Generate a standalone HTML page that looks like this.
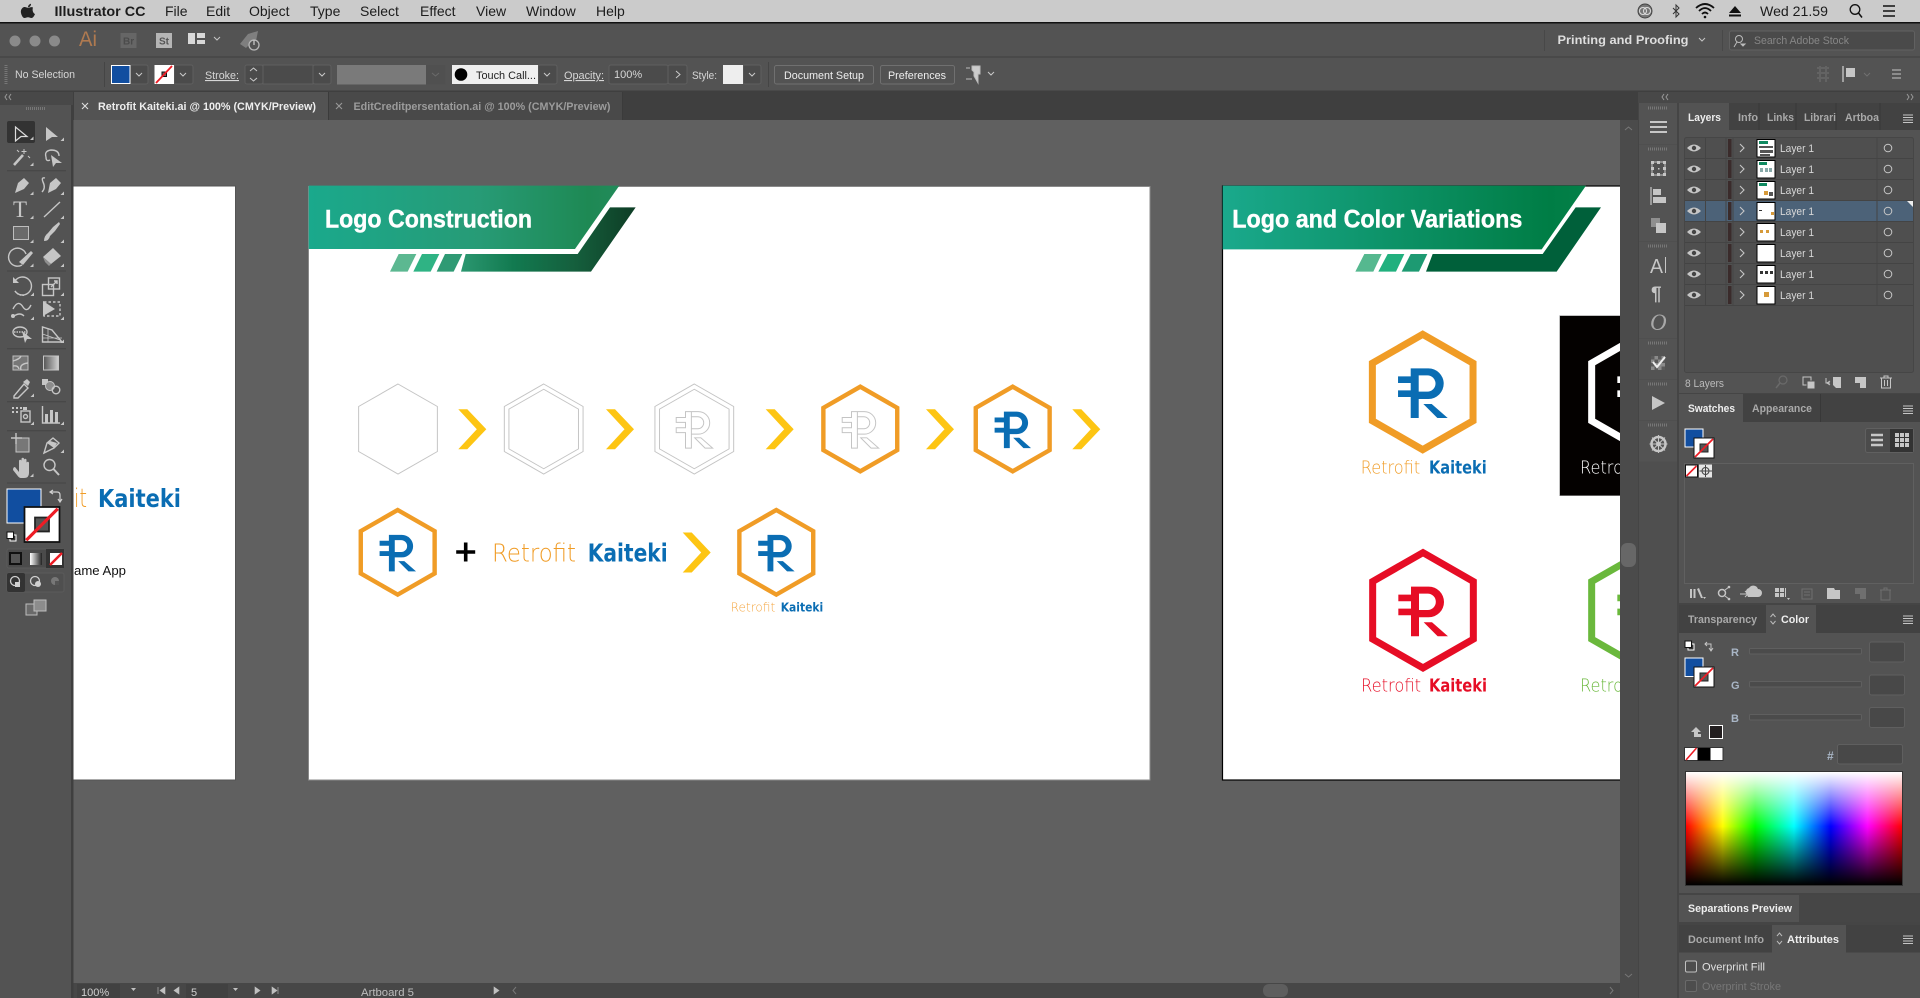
<!DOCTYPE html>
<html><head><meta charset="utf-8"><title>Illustrator CC</title>
<style>
html,body{margin:0;padding:0;background:#535353;width:1920px;height:998px;overflow:hidden}
svg{display:block;position:absolute;left:0;top:0}
text{font-family:"Liberation Sans",sans-serif}
.m{font-size:14px;fill:#1c1c1c}
.c{font-size:11px;fill:#d6d6d6}
.t{font-size:11px;fill:#a9a9a9;font-weight:bold}
.ta{font-size:11px;fill:#eeeeee;font-weight:bold}
.l{font-size:11px;fill:#d8d8d8}
.i{fill:#c6c6c6}
.s{fill:none;stroke:#c6c6c6;stroke-width:1.4}
text.r{font-family:"DejaVu Sans",sans-serif;font-weight:200}
text.k{font-family:"DejaVu Sans",sans-serif;font-weight:bold}
</style></head><body>
<svg width="1920" height="998" viewBox="0 0 1920 998" xmlns="http://www.w3.org/2000/svg">
<defs>
<path id="hexO" d="M0,-184L161,-92V92L0,184L-161,92V-92Z"/>
<path id="hexC" d="M0,-173L151,-86.5V86.5L0,173L-151,86.5V-86.5Z"/>
<path id="rl" d="M-36,-71H-12V78H-36V15H-74V-5H-36V-27H-74V-47H-36ZM-12,-71H17A46,46 0 0 1 17,21H-12V-1H14A24.5,24.5 0 0 0 14,-50H-12ZM2,36H27L75,78H44Z"/>
<path id="chev" d="M0,0H9L28,20L9,40H0L18.500,20Z" fill="#fdc513"/>
<path id="cn" d="M0,0L3.500,0L3.500,-3.500Z" fill="#c6c6c6"/>
<path id="menuic" d="M0,0H10M0,2.500H10M0,5H10M0,7.500H10" stroke="#c6c6c6" stroke-width="1" fill="none"/>
<g id="none"><rect x="0" y="0" width="20" height="20" fill="#fff" stroke="#111" stroke-width="1"/><rect x="6" y="6" width="8" height="8" fill="#555" stroke="#222"/><path d="M1,19L19,1" stroke="#ee1c25" stroke-width="1.800"/></g>
<g id="rowd">
<path d="M1687,10Q1694,3 1701,10Q1694,17 1687,10Z" fill="#c6c6c6"/><circle cx="1694" cy="10" r="2.200" fill="#444"/>
<rect x="1728" y="1" width="3.500" height="18" fill="#3a2b2b"/>
<path d="M1705.500,0V20M1726,0V20M1733,0V20M1877,0V20" stroke="#444" stroke-width="1"/>
<path d="M1740,6L1744,10L1740,14" fill="none" stroke="#c6c6c6" stroke-width="1.100"/>
<circle cx="1888" cy="10" r="3.800" fill="none" stroke="#c6c6c6"/>
<rect x="1757" y="1.500" width="18" height="17.500" fill="#fff" stroke="#000"/>
<path d="M1685,20.500H1913" stroke="#444"/>
</g>
<linearGradient id="g1" x1="0" x2="1" y1="0" y2="0"><stop offset="0" stop-color="#1aa98c"/><stop offset=".55" stop-color="#279b76"/><stop offset=".9" stop-color="#1e8954"/><stop offset="1" stop-color="#228a5a"/></linearGradient>
<linearGradient id="g2" x1="0" x2="1" y1="0" y2="0"><stop offset="0" stop-color="#2b9770"/><stop offset=".3" stop-color="#127a50"/><stop offset=".65" stop-color="#155f3d"/><stop offset="1" stop-color="#0e3d25"/></linearGradient>
<linearGradient id="g3" x1="0" x2="1" y1="0" y2="0"><stop offset="0" stop-color="#1aa98c"/><stop offset=".9" stop-color="#007d45"/><stop offset="1" stop-color="#048048"/></linearGradient>
<linearGradient id="sp"><stop offset="0" stop-color="#ff0000"/><stop offset=".17" stop-color="#ffff00"/><stop offset=".32" stop-color="#00ff00"/><stop offset=".5" stop-color="#00ffff"/><stop offset=".67" stop-color="#0000ff"/><stop offset=".84" stop-color="#ff00ff"/><stop offset="1" stop-color="#ff0000"/></linearGradient>
<linearGradient id="sw" x1="0" x2="0" y1="0" y2="1"><stop offset="0" stop-color="#fff"/><stop offset=".48" stop-color="#fff" stop-opacity="0"/></linearGradient>
<linearGradient id="sb" x1="0" x2="0" y1="0" y2="1"><stop offset=".48" stop-color="#000" stop-opacity="0"/><stop offset="1" stop-color="#000"/></linearGradient>
<linearGradient id="gr"><stop offset="0" stop-color="#555"/><stop offset="1" stop-color="#d0d0d0"/></linearGradient>
<linearGradient id="grb"><stop offset="0" stop-color="#fff"/><stop offset="1" stop-color="#222"/></linearGradient>
<clipPath id="cv"><rect x="73" y="120" width="1547" height="863"/></clipPath>
</defs>

<!-- base -->
<rect width="1920" height="998" fill="#535353"/>

<!-- menu bar -->
<rect width="1920" height="22" fill="#cbcbcb"/>
<rect y="22" width="1920" height="1.500" fill="#111"/>
<path d="M33,7.500C31,6.500 29.500,7.800 28,7.800C26.500,7.800 25,6.500 23.500,7.300C21.500,8.300 20.500,10.500 21,13C21.500,15.500 23,18 24.500,18C25.800,18 26.500,17.200 28,17.200C29.500,17.200 30,18 31.500,18C33,18 34.500,15.500 35,14C33,13.200 32,10 33,7.500ZM28,7.300C28,5.500 29.500,4 31,3.800C31.200,5.500 29.800,7.300 28,7.300Z" fill="#222"/>
<text x="54.500" y="16" class="m" style="font-weight:bold" textLength="91" lengthAdjust="spacingAndGlyphs">Illustrator CC</text>
<text x="165" y="16" class="m">File</text>
<text x="206" y="16" class="m">Edit</text>
<text x="249" y="16" class="m">Object</text>
<text x="310" y="16" class="m">Type</text>
<text x="360" y="16" class="m">Select</text>
<text x="420" y="16" class="m">Effect</text>
<text x="476" y="16" class="m">View</text>
<text x="526" y="16" class="m">Window</text>
<text x="596" y="16" class="m">Help</text>
<g fill="none" stroke="#333">
<circle cx="1645" cy="11" r="7" fill="#777" stroke="#444"/><circle cx="1643" cy="11" r="3.500" stroke="#ddd"/><circle cx="1647" cy="11" r="3.500" stroke="#ddd"/>
<path d="M1673,8L1679,14L1676,17V5L1679,8L1673,14" stroke-width="1"/>
<path d="M1696,8Q1705,0 1714,8M1699,11Q1705,5 1711,11M1702,14Q1705,11 1708,14" stroke="#111" stroke-width="1.800"/><circle cx="1705" cy="17" r="1.300" fill="#111" stroke="none"/>
<path d="M1735,6L1741,13H1729Z" fill="#111" stroke="none"/><rect x="1729" y="14.500" width="12" height="2" fill="#111" stroke="none"/>
<circle cx="1855" cy="9.500" r="4.800" stroke="#111" stroke-width="1.300"/><path d="M1858.500,13L1862,17.500" stroke="#111" stroke-width="1.500"/>
<path d="M1883,6H1895M1883,11H1895M1883,16H1895" stroke="#111" stroke-width="1.600"/>
</g>
<text x="1760" y="16" class="m" textLength="68" lengthAdjust="spacingAndGlyphs">Wed 21.59</text>

<!-- app bar -->
<rect y="23.500" width="1920" height="33" fill="#535353"/>
<rect y="56.500" width="1920" height="1" fill="#3f3f3f"/>
<circle cx="15" cy="41" r="5.500" fill="#8a8a8a"/><circle cx="35" cy="41" r="5.500" fill="#8a8a8a"/><circle cx="54.500" cy="41" r="5.500" fill="#8a8a8a"/>
<text x="79" y="46" style="font-size:21px;fill:#b07a50" textLength="18" lengthAdjust="spacingAndGlyphs">Ai</text>
<rect x="120.500" y="33" width="16" height="15" fill="#666"/><text x="123" y="44.500" style="font-size:10px;font-weight:bold;fill:#4b4b4b">Br</text>
<rect x="156" y="33" width="16" height="15" fill="#b5b5b5"/><text x="159" y="44.500" style="font-size:10px;font-weight:bold;fill:#555">St</text>
<path d="M188,33H195V44H188ZM197,33H205V38H197ZM197,40H205V44H197Z" fill="#d8d8d8"/>
<path d="M214,37L217,40L220,37" fill="none" stroke="#c6c6c6"/>
<path d="M240,44L248,34L258,31L256,41L250,44L246,48Z" fill="#7f7f7f"/><circle cx="254" cy="45" r="5" fill="#535353" stroke="#b8b8b8" stroke-width="1.300"/><path d="M254,40V45" stroke="#c6c6c6" stroke-width="1.300"/>
<path d="M1544.500,30V51M1722.500,30V51" stroke="#484848"/>
<text x="1557.500" y="44" style="font-size:12px;font-weight:bold;fill:#dedede" textLength="131" lengthAdjust="spacingAndGlyphs">Printing and Proofing</text>
<path d="M1699,38L1702,41L1705,38" fill="none" stroke="#c6c6c6"/>
<rect x="1729.500" y="31" width="185" height="19" rx="2" fill="#4a4a4a" stroke="#616161"/>
<circle cx="1739" cy="39" r="3.500" fill="none" stroke="#bbb"/><path d="M1737,42L1734,47M1741,44H1745L1743,46Z" stroke="#bbb" fill="#bbb"/>
<text x="1754" y="44" style="font-size:11px;fill:#868686" textLength="95" lengthAdjust="spacingAndGlyphs">Search Adobe Stock</text>

<!-- control bar -->
<rect y="57.500" width="1920" height="33" fill="#535353"/>
<rect y="90.500" width="1920" height="1.500" fill="#3f3f3f"/>
<path d="M6,65V84" stroke="#777" stroke-width="3" stroke-dasharray="1 1"/>
<text x="15" y="78" class="c" textLength="60" lengthAdjust="spacingAndGlyphs">No Selection</text>
<path d="M104.500,62V87" stroke="#454545"/>
<g fill="#4b4b4b" stroke="#5f5f5f">
<rect x="130" y="65" width="18" height="19" rx="2"/><rect x="174" y="65" width="19" height="19" rx="2"/>
<rect x="245" y="65" width="18" height="19" rx="2"/><rect x="263" y="65" width="50" height="19"/><rect x="313" y="65" width="18" height="19" rx="2"/>
<rect x="538" y="65" width="19" height="19" rx="2"/>
<rect x="609" y="65" width="59" height="19" rx="2"/><rect x="668" y="65" width="19" height="19" rx="2"/>
<rect x="743" y="65" width="18" height="19" rx="2"/>
</g>
<rect x="111.500" y="65.500" width="18.500" height="18" fill="#114ea0" stroke="#fff"/>
<rect x="154.500" y="65" width="19.500" height="19" fill="#fff"/><rect x="162" y="72" width="4.500" height="4.500" fill="#666" stroke="#111"/><path d="M156,83L172,66" stroke="#ee1c25" stroke-width="1.800"/>
<g fill="none" stroke="#c9c9c9" stroke-width="1"><path d="M136,73L139,76L142,73M180,73L183,76L186,73M319,73L322,76L325,73M544,73L547,76L550,73M749,73L752,76L755,73M988,72L991,75L994,72"/><path d="M250,71L253.500,68L257,71M250,78L253.500,81L257,78"/><path d="M676,71L680,74.500L676,78"/></g>
<text x="205" y="79" class="c" textLength="34" lengthAdjust="spacingAndGlyphs" style="text-decoration:underline dotted">Stroke:</text>
<rect x="337" y="65" width="89" height="19.500" fill="#7a7a7a"/><rect x="426" y="65" width="19.500" height="19.500" fill="#505050"/><path d="M432,73L435.500,76L439,73" stroke="#6a6a6a" fill="none"/>
<rect x="452" y="65" width="86" height="19" fill="#efefef"/><circle cx="461" cy="74.500" r="6.300" fill="#000"/>
<text x="476" y="79" style="font-size:11px;fill:#222" textLength="60" lengthAdjust="spacingAndGlyphs">Touch Call...</text>
<text x="564" y="79" class="c" textLength="40" lengthAdjust="spacingAndGlyphs" style="text-decoration:underline dotted">Opacity:</text>
<text x="614" y="78" class="c">100%</text>
<text x="692" y="79" class="c" textLength="25" lengthAdjust="spacingAndGlyphs">Style:</text>
<rect x="723" y="65" width="20" height="19" fill="#eee"/>
<path d="M768.500,62V87" stroke="#454545"/>
<rect x="774.500" y="65.500" width="99" height="18.500" rx="2" fill="#535353" stroke="#707070"/>
<text x="784" y="79" style="font-size:11px;fill:#eee" textLength="80" lengthAdjust="spacingAndGlyphs">Document Setup</text>
<rect x="880.500" y="65.500" width="74" height="18.500" rx="2" fill="#535353" stroke="#707070"/>
<text x="888" y="79" style="font-size:11px;fill:#eee" textLength="58" lengthAdjust="spacingAndGlyphs">Preferences</text>
<path d="M966,68H970M972,70V66H980V74H978L978,83L974,76V72Z" fill="#ccc" stroke="#bbb"/><path d="M966,79H972" stroke="#bbb"/>
<path d="M1817,68H1829M1817,73H1829M1817,78H1829M1820,66V82M1826,66V82" stroke="#636363" stroke-width="2"/>
<path d="M1843,66V82" stroke="#bbb" stroke-width="1.500"/><path d="M1846,68H1855V77H1846Z" fill="#c6c6c6"/><path d="M1864,73L1867,76L1870,73" stroke="#707070" fill="none"/>
<path d="M1892,70H1901M1892,74H1901M1892,78H1901" stroke="#c6c6c6"/>

<!-- tabs -->
<rect y="92" width="1920" height="28" fill="#3f3f3f"/>
<rect y="92" width="73" height="13" fill="#484848"/>
<rect x="74" y="92" width="254" height="28" fill="#535353"/>
<rect x="328" y="92" width="294" height="28" fill="#494949"/>
<path d="M622.500,92V120M328.500,92V120" stroke="#3b3b3b"/>
<path d="M7,94L5,97L7,100M11,94L9,97L11,100" stroke="#999" fill="none"/>
<path d="M82,103L88,109M88,103L82,109" stroke="#ddd" stroke-width="1.100"/>
<text x="98" y="110" style="font-size:11px;font-weight:bold;fill:#eee" textLength="218" lengthAdjust="spacingAndGlyphs">Retrofit Kaiteki.ai @ 100% (CMYK/Preview)</text>
<path d="M336,103L342,109M342,103L336,109" stroke="#999" stroke-width="1.100"/>
<text x="353.500" y="110" style="font-size:11px;font-weight:bold;fill:#9c9c9c" textLength="257" lengthAdjust="spacingAndGlyphs">EditCreditpersentation.ai @ 100% (CMYK/Preview)</text>

<!-- canvas -->
<rect x="73" y="120" width="1547" height="863" fill="#606060"/>
<g clip-path="url(#cv)">
<rect x="60" y="186" width="175.500" height="594" fill="#fff" stroke="#555"/>
<text x="74" y="507" class="r" style="font-size:26px;fill:#f09c26" textLength="13" lengthAdjust="spacingAndGlyphs">it</text>
<text x="98" y="507" class="k" style="font-size:25px;fill:#0a6db3" textLength="83" lengthAdjust="spacingAndGlyphs">Kaiteki</text>
<text x="74" y="575" style="font-size:13px;fill:#111" textLength="52" lengthAdjust="spacingAndGlyphs">ame App</text>

<rect x="308.500" y="186.500" width="841.500" height="593.500" fill="#fff" stroke="#8a8a8a"/>
<g transform="translate(300,170) scale(.33333)">
<path d="M26,47H958L825,237H26Z" fill="url(#g1)"/>
<path d="M497,252H833L930,112H1007L873,305H483Z" fill="url(#g2)"/>
<path d="M296,252H349L323,305H270Z" fill="#5cb891"/><path d="M366,252H418L392,305H340Z" fill="#2fb384"/><path d="M435,252H487L461,305H410Z" fill="#2f9a74"/>
</g>
<text x="325" y="227.500" style="font-size:25px;font-weight:bold;fill:#fff;stroke:#fff;stroke-width:.4" textLength="207" lengthAdjust="spacingAndGlyphs">Logo Construction</text>

<!-- row 1 -->
<g fill="none" stroke="#c4c4c4">
<g transform="translate(398,429) scale(.2446)"><use href="#hexO" stroke-width="4"/></g>
<g transform="translate(543.700,429) scale(.2446)"><use href="#hexO" stroke-width="4"/></g>
<g transform="translate(543.700,429) scale(.216)"><use href="#hexO" stroke-width="4.500"/></g>
<g transform="translate(694.300,429) scale(.2446)"><use href="#hexO" stroke-width="4"/></g>
<g transform="translate(694.300,429) scale(.216)"><use href="#hexO" stroke-width="4.500"/></g>
<g transform="translate(694.300,429) scale(.2446)"><use href="#rl" stroke-width="4"/></g>
<g transform="translate(860.300,429) scale(.2446)"><use href="#rl" stroke-width="4"/></g>
</g>
<g transform="translate(860.300,429) scale(.2446)"><use href="#hexC" fill="none" stroke="#f09c26" stroke-width="18"/></g>
<g transform="translate(1012.700,429) scale(.2446)"><use href="#hexC" fill="none" stroke="#f09c26" stroke-width="18"/><use href="#rl" fill="#0a6db3"/></g>
<use href="#chev" x="458.300" y="409.300"/><use href="#chev" x="606" y="409.300"/><use href="#chev" x="765.700" y="409.300"/><use href="#chev" x="926" y="409.300"/><use href="#chev" x="1072.300" y="409.300"/>

<!-- row 2 -->
<g transform="translate(397.700,552.300) scale(.2446)"><use href="#hexC" fill="none" stroke="#f09c26" stroke-width="18"/><use href="#rl" fill="#0a6db3"/></g>
<path d="M465.700,542.500V561.500M456.200,552H475.200" stroke="#000" stroke-width="3.600" fill="none"/>
<text x="492" y="561.700" class="r" style="font-size:25px;fill:#f09c26" textLength="84" lengthAdjust="spacingAndGlyphs">Retrofit</text>
<text x="587.700" y="561.700" class="k" style="font-size:25px;fill:#0a6db3" textLength="80" lengthAdjust="spacingAndGlyphs">Kaiteki</text>
<use href="#chev" x="682.700" y="532.500"/>
<g transform="translate(776.300,552.300) scale(.2446)"><use href="#hexC" fill="none" stroke="#f09c26" stroke-width="18"/><use href="#rl" fill="#0a6db3"/></g>
<text x="730.700" y="611.700" class="r" style="font-size:12px;fill:#f4a640" textLength="44.500" lengthAdjust="spacingAndGlyphs">Retrofit</text>
<text x="780.700" y="611.700" class="k" style="font-size:12px;fill:#0a6db3" textLength="42.500" lengthAdjust="spacingAndGlyphs">Kaiteki</text>

<!-- artboard 3 -->
<rect x="1222.500" y="186" width="500" height="594" fill="#fff" stroke="#000" stroke-width="1.200"/>
<g transform="translate(1220,180) scale(.33333)">
<path d="M8,17H1098L965,208H8Z" fill="url(#g3)"/>
<path d="M638,222H968L1067,82H1143L1010,275H618Z" fill="#00603a"/>
<path d="M433,222H485L460,275H406Z" fill="#55b88f"/><path d="M503,222H553L528,275H475Z" fill="#21b07e"/><path d="M572,222H622L597,275H545Z" fill="#1d9a72"/>
</g>
<text x="1232.300" y="227.700" style="font-size:25px;font-weight:bold;fill:#fff;stroke:#fff;stroke-width:.4" textLength="290" lengthAdjust="spacingAndGlyphs">Logo and Color Variations</text>

<g transform="translate(1422.700,392) scale(.33333)"><use href="#hexC" fill="none" stroke="#f09c26" stroke-width="21"/><use href="#rl" fill="#0a6db3"/></g>
<text x="1360.700" y="473.300" class="r" style="font-size:18px;fill:#f09c26" textLength="59.500" lengthAdjust="spacingAndGlyphs">Retrofit</text>
<text x="1429" y="473.300" class="k" style="font-size:18px;fill:#0a6db3" textLength="57.700" lengthAdjust="spacingAndGlyphs">Kaiteki</text>

<rect x="1559.700" y="315.700" width="100" height="180" fill="#040100" stroke="#999" stroke-width=".6"/>
<g transform="translate(1642,392) scale(.33333)"><use href="#hexC" fill="none" stroke="#fff" stroke-width="21"/><use href="#rl" fill="#fff"/></g>
<text x="1580" y="473.300" class="r" style="font-size:18px;fill:#fff" textLength="59.500" lengthAdjust="spacingAndGlyphs">Retrofit</text>

<g transform="translate(1423,610.300) scale(.33333)"><use href="#hexC" fill="none" stroke="#e60d25" stroke-width="21"/><use href="#rl" fill="#e60d25"/></g>
<text x="1361" y="691.700" class="r" style="font-size:18px;fill:#e60d25" textLength="60" lengthAdjust="spacingAndGlyphs">Retrofit</text>
<text x="1429" y="691.700" class="k" style="font-size:18px;fill:#e60d25" textLength="58" lengthAdjust="spacingAndGlyphs">Kaiteki</text>

<g transform="translate(1642,610.300) scale(.33333)"><use href="#hexC" fill="none" stroke="#6ab83c" stroke-width="21"/><use href="#rl" fill="#6ab83c"/></g>
<text x="1580" y="691.700" class="r" style="font-size:18px;fill:#6ab83c" textLength="59.500" lengthAdjust="spacingAndGlyphs">Retrofit</text>
</g>

<!-- scrollbars -->
<rect x="1620" y="120" width="18" height="878" fill="#4b4b4b"/>
<rect x="1621" y="543" width="15" height="24" rx="6" fill="#676767"/>
<path d="M1625,130L1628.500,127L1632,130M1625,974L1628.500,977L1632,974" fill="none" stroke="#777"/>
<rect x="73" y="983" width="1547" height="15" fill="#474747"/>
<rect x="1263" y="984" width="25" height="13" rx="6" fill="#5e5e5e"/>
<path d="M1610,987L1613,990.500L1610,994M516,987L513,990.500L516,994" fill="none" stroke="#777"/>
<rect x="77" y="984" width="43" height="14" fill="#414141"/><rect x="186" y="984" width="42" height="14" fill="#414141"/>
<text x="81" y="996" style="font-size:11px;fill:#cfcfcf">100%</text>
<text x="191" y="996" style="font-size:11px;fill:#cfcfcf">5</text>
<text x="361" y="996" style="font-size:11px;fill:#bdbdbd" textLength="53" lengthAdjust="spacingAndGlyphs">Artboard 5</text>
<g fill="#c0c0c0"><path d="M131,988L136,988L133.500,991ZM233,988L238,988L235.500,991Z"/><path d="M158,987V994M165,987L160,990.500L165,994ZM179,987L174,990.500L179,994ZM255,987L260,990.500L255,994ZM272,987L277,990.500L272,994ZM278,987V994M494,987L499,990.500L494,994Z" stroke="#c0c0c0" stroke-width=".6"/></g>

<!-- left toolbar -->
<rect x="0" y="105" width="72" height="878" fill="#535353"/>
<rect x="0" y="983" width="73" height="15" fill="#535353"/>
<rect x="71" y="105" width="2.500" height="893" fill="#3f3f3f"/>
<path d="M26,108.500H46" stroke="#777" stroke-width="3" stroke-dasharray="1 1"/>
<path d="M7,170.700H66M7,271H66M7,348.700H66M7,401.700H66M7,430.700H66M7,483H66" stroke="#444"/>
<rect x="7" y="121" width="28" height="22" rx="2" fill="#333"/>
<path d="M15.500,127L27,136.500H21L15.500,141Z" fill="none" stroke="#ddd" stroke-width="1.200"/>
<path d="M46,127L58,137H52L46,141Z" class="i"/>
<path d="M14,165L23,155" stroke="#c6c6c6" stroke-width="2.600"/><path d="M24,149V154M21.500,151.500H26.500M17,150L19,152M28,156L30,158" stroke="#c6c6c6"/>
<path d="M46,157Q44,151 51,150Q59,150 59,156M46,157Q46,162 50,160" class="s"/><path d="M51,155L62,163H56L53,167Z" class="i"/>
<path d="M15,193L18,183L24,178L29,183L24,189Z" class="i"/>
<path d="M42,192Q46,188 43,182Q41,177 45,178" class="s"/><path d="M48,193L50,183L56,178L61,183L56,189Z" class="i"/>
<text x="13" y="217" style="font-family:'Liberation Serif',serif;font-size:23px;fill:#c6c6c6">T</text>
<path d="M44,217L60,202" stroke="#c6c6c6" stroke-width="1.400"/>
<rect x="13.500" y="226.500" width="15" height="13" fill="#6a6a6a" stroke="#bdbdbd"/>
<path d="M44,241Q49,241 50,236L55,231L60,224L59,222L53,227L48,233Q44,236 44,241Z" class="i"/>
<path d="M26,254A9,9 0 1 0 22,265" class="s"/><path d="M19,262L31,251L33,253L23,265Z" class="i"/>
<path d="M43,257L53,248L61,256L51,264Z" class="i"/><path d="M43,257L51,264L49,266L45,262Z" fill="#8f8f8f"/>
<path d="M15,281A9,9 0 1 1 15,291" class="s"/><path d="M15,291A9,9 0 0 0 25,295" class="s" stroke-dasharray="1.500 1.500"/><path d="M13,277V283H19Z" class="i"/>
<rect x="42.500" y="284.500" width="11" height="11" class="s"/><rect x="48.500" y="278" width="11" height="11" class="s"/><path d="M51,287L57,281M54,281H57V284" class="s"/>
<path d="M13,309Q18,299 23,307Q27,313 31,305M14,316Q20,312 24,316" class="s" stroke-width="2"/><circle cx="13" cy="316" r="2" class="i"/>
<path d="M43,301L55,309L43,316Z" class="i"/><rect x="44" y="302" width="16" height="14" class="s" stroke-dasharray="2.500 2"/>
<ellipse cx="20" cy="332" rx="7" ry="5" class="s"/><path d="M22,331L32,339H27L25,343Z" class="i"/><path d="M14,332H26" class="s" stroke-dasharray="1.500 1"/>
<path d="M42.500,327V342H62L52,330Z" class="s"/><path d="M42.500,334L60,340M48,328V342M42.500,338H62" class="s" style="stroke-width:.8"/>
<rect x="13" y="356" width="15" height="14" fill="#777" stroke="#bdbdbd"/><path d="M13,361Q20,359 21,356M21,370Q19,364 28,363M13,366Q18,365 19,369" class="s"/>
<rect x="43.500" y="356" width="15" height="14" fill="url(#gr)" stroke="#c6c6c6"/>
<path d="M14,396L24,384L28,388L18,398L14,398Z" class="s"/><path d="M23,382L27,379L30,382L28,386Z" class="i"/>
<rect x="42" y="379" width="6" height="6" class="i"/><circle cx="50" cy="386" r="4.500" fill="#8c8c8c" stroke="#c6c6c6"/><circle cx="56" cy="390" r="3.800" class="s"/>
<rect x="21" y="411" width="9" height="11" class="s"/><circle cx="25.500" cy="416.500" r="2" class="s"/><path d="M12,407h2v2h-2zM16,407h2v2h-2zM20,407h2v2h-2zM12,411h2v2h-2zM16,411h2v2h-2z" class="i"/><rect x="23" y="407" width="4" height="3" class="i"/>
<path d="M42.500,406V423H60" class="s"/><path d="M45,414h3v9h-3zM50,410h3v13h-3zM55,412h3v11h-3z" class="i"/>
<path d="M16,438H29V452H16Z" fill="#777" stroke="#c6c6c6"/><path d="M11,438H22M16,433V444" class="s"/>
<path d="M44,453L47,443L53,438L59,443L54,448Z" class="s"/><path d="M50,441L57,443L54,448L47,443Z" class="i"/>
<path d="M15,467L19,472V461a1,1 0 0 1 2.500,0V467V459a1,1 0 0 1 2.500,0V467V460a1,1 0 0 1 2.500,0V468V463a1,1 0 0 1 2.500,0V473Q29,478 24,478H21Q19,478 17,475L13,470Q13,467 15,467Z" class="i"/>
<circle cx="49.500" cy="465" r="5.500" class="s"/><path d="M53.500,469L59,475" stroke="#c6c6c6" stroke-width="2"/>
<use href="#cn" x="30" y="140"/><use href="#cn" x="60.500" y="141"/><use href="#cn" x="30" y="166"/>
<use href="#cn" x="30" y="195"/><use href="#cn" x="60.500" y="195"/><use href="#cn" x="30" y="219"/><use href="#cn" x="60.500" y="219"/><use href="#cn" x="30" y="243"/><use href="#cn" x="60.500" y="243"/><use href="#cn" x="30" y="267"/><use href="#cn" x="60.500" y="267"/>
<use href="#cn" x="30.500" y="296"/><use href="#cn" x="60.500" y="296"/><use href="#cn" x="30.500" y="320"/><use href="#cn" x="60.500" y="320"/><use href="#cn" x="60.500" y="343"/>
<use href="#cn" x="30.500" y="397"/><use href="#cn" x="30.500" y="425"/><use href="#cn" x="60.500" y="425"/><use href="#cn" x="60.500" y="453"/><use href="#cn" x="30" y="477"/>
<rect x="7" y="489" width="34" height="34" fill="#114ea0" stroke="#fff"/>
<path d="M51,492H57Q60,492 60,495V501M58,499L60,502L62,499M53,490L50,492L53,494" fill="none" stroke="#cfcfcf" stroke-width="1.200"/>
<g transform="translate(24.500,507) scale(1.750)"><use href="#none"/></g>
<rect x="10" y="535" width="6" height="6" fill="#333" stroke="#fff"/><rect x="7" y="532" width="6.500" height="6.500" fill="#fff" stroke="#111"/>
<rect x="7" y="549" width="57" height="19" rx="2" fill="#4b4b4b" stroke="#5b5b5b"/>
<rect x="46" y="549" width="18" height="19" fill="#333"/>
<rect x="10" y="553" width="11" height="11" fill="#555" stroke="#111" stroke-width="2"/>
<rect x="30" y="553" width="12" height="12" fill="url(#grb)"/>
<rect x="50" y="553" width="12" height="12" fill="#fff"/><path d="M50,565L62,553" stroke="#ee1c25" stroke-width="2.500"/>
<rect x="7" y="573" width="57" height="19" rx="2" fill="#4f4f4f" stroke="#5b5b5b"/>
<rect x="7" y="573" width="18" height="19" rx="2" fill="#333"/>
<circle cx="15" cy="581" r="4.500" fill="none" stroke="#d0d0d0" stroke-width="1.300"/><rect x="15" y="582" width="5" height="5" fill="#d0d0d0"/>
<circle cx="35" cy="581" r="4.500" fill="none" stroke="#d0d0d0" stroke-width="1.300"/><circle cx="38" cy="584" r="3" fill="#d0d0d0"/>
<circle cx="55" cy="581" r="4" fill="#777"/><rect x="55" y="581" width="4" height="4" fill="#555"/>
<rect x="26" y="604" width="11" height="11" fill="#6a6a6a" stroke="#bdbdbd"/><rect x="34" y="600" width="12" height="11" fill="#8c8c8c" stroke="#bdbdbd"/>

<!-- right dock -->
<rect x="1638" y="92" width="282" height="906" fill="#454545"/>
<rect x="1638" y="92" width="282" height="11" fill="#484848"/>
<path d="M1664,94L1662,97L1664,100M1668,94L1666,97L1668,100M1907,94L1909,97L1907,100M1911,94L1913,97L1911,100" fill="none" stroke="#999"/>
<rect x="1639" y="103" width="38" height="895" fill="#4f4f4f"/>
<rect x="1639" y="103" width="38" height="41" fill="#535353"/><rect x="1639" y="145" width="38" height="96" fill="#535353"/><rect x="1639" y="242" width="38" height="96" fill="#535353"/><rect x="1639" y="339" width="38" height="40" fill="#535353"/><rect x="1639" y="380" width="38" height="40" fill="#535353"/><rect x="1639" y="421" width="38" height="40.500" fill="#535353"/>
<path d="M1648,108H1668M1648,149H1668M1648,246H1668M1648,343H1668M1648,384H1668M1648,425H1668" stroke="#777" stroke-width="3" stroke-dasharray="1 1"/>
<path d="M1650,122H1667M1650,127H1667M1650,132H1667" stroke="#c6c6c6" stroke-width="2"/>
<rect x="1652" y="162" width="13" height="13" fill="none" stroke="#c6c6c6"/><path d="M1651,161h3v3h-3zM1657,161h3v3h-3zM1663,161h3v3h-3zM1651,167h3v3h-3zM1663,167h3v3h-3zM1651,173h3v3h-3zM1657,173h3v3h-3zM1663,173h3v3h-3z" class="i"/><rect x="1658" y="168" width="1.500" height="1.500" class="i"/>
<path d="M1651,187V205" stroke="#c6c6c6" stroke-width="1.200"/><path d="M1653,189H1661V195H1653ZM1653,197H1666V203H1653Z" class="i"/>
<path d="M1651,218H1660V227H1651Z" fill="#8f8f8f"/><path d="M1656,223H1666V233H1656Z" class="i"/>
<text x="1650" y="273" style="font-size:20px;fill:#c6c6c6" textLength="13" lengthAdjust="spacingAndGlyphs">A</text><path d="M1665.500,257V273" stroke="#c6c6c6"/>
<text x="1651" y="300" style="font-size:19px;font-weight:bold;fill:#c6c6c6">¶</text>
<text x="1650" y="330" style="font-family:'Liberation Serif',serif;font-style:italic;font-size:23px;fill:#a8a8a8">O</text>
<path d="M1651,356h14v14h-14z" fill="#8a8a8a"/><path d="M1651,356h3.500v3.500h-3.500zM1658,356h3.500v3.500h-3.500zM1654.500,359.500h3.500v3.500h-3.500zM1661.500,359.500h3.500v3.500h-3.500zM1651,363h3.500v3.500h-3.500zM1654.500,366.500h3.500v3.500h-3.500zM1661.500,366.500h3.500v3.500h-3.500z" fill="#5a5a5a"/><path d="M1653,362L1657,367L1665,357" fill="none" stroke="#eee" stroke-width="2"/>
<path d="M1652,396L1665,403L1652,410Z" class="i"/>
<circle cx="1658.500" cy="444" r="7" fill="none" stroke="#c6c6c6" stroke-width="2.500"/><circle cx="1658.500" cy="444" r="2.500" class="i"/><path d="M1658.500,435V453M1649.500,444H1667.500M1652,437.500L1665,450.500M1665,437.500L1652,450.500" stroke="#c6c6c6"/>

<!-- layers panel -->
<rect x="1679" y="103" width="241" height="290" fill="#535353"/>
<rect x="1679" y="103" width="241" height="27" fill="#424242"/>
<rect x="1679" y="103" width="50" height="27" fill="#535353"/>
<path d="M1759,103V130M1796,103V130M1836,103V130M1880,103V130" stroke="#383838"/>
<text x="1688" y="121" class="ta" textLength="33" lengthAdjust="spacingAndGlyphs">Layers</text>
<text x="1738" y="121" class="t" textLength="20" lengthAdjust="spacingAndGlyphs">Info</text>
<text x="1767" y="121" class="t" textLength="27" lengthAdjust="spacingAndGlyphs">Links</text>
<text x="1804" y="121" class="t" textLength="32" lengthAdjust="spacingAndGlyphs">Librari</text>
<text x="1845" y="121" class="t" textLength="34" lengthAdjust="spacingAndGlyphs">Artboa</text>
<use href="#menuic" x="1903" y="115"/>
<rect x="1684.500" y="137.500" width="229" height="235" rx="2" fill="#4f4f4f" stroke="#464646"/>
<rect x="1685" y="201" width="228" height="20" fill="#4c6278"/>
<use href="#rowd" y="138"/><use href="#rowd" y="159"/><use href="#rowd" y="180"/><use href="#rowd" y="201"/><use href="#rowd" y="222"/><use href="#rowd" y="243"/><use href="#rowd" y="264"/><use href="#rowd" y="285"/>
<path d="M1907,201H1913V207Z" fill="#eee"/>
<g fill="#0f8a60"><rect x="1759" y="141" width="9" height="3"/><rect x="1759" y="162" width="8" height="3"/><rect x="1759" y="183" width="8" height="3"/></g>
<g fill="#555"><rect x="1759" y="146" width="14" height="2"/><rect x="1760" y="150" width="13" height="3"/><rect x="1760" y="154" width="10" height="2"/><rect x="1769" y="192" width="4" height="4"/></g>
<g fill="#8aa"><rect x="1760" y="168" width="3" height="4"/><rect x="1765" y="168" width="3" height="4"/><rect x="1769" y="168" width="3" height="4"/></g>
<g fill="#d69a3a"><rect x="1764" y="191" width="4" height="4"/><rect x="1771" y="212" width="3" height="3"/><rect x="1760" y="230" width="3" height="3"/><rect x="1766" y="230" width="3" height="3"/><rect x="1764" y="292" width="5" height="5"/></g>
<g fill="#333"><rect x="1759" y="210" width="3" height="1"/><rect x="1760" y="271" width="3" height="3"/><rect x="1765" y="271" width="3" height="3"/><rect x="1770" y="271" width="3" height="3"/></g>
<text x="1780" y="152" class="l" textLength="34" lengthAdjust="spacingAndGlyphs">Layer 1</text>
<text x="1780" y="173" class="l" textLength="34" lengthAdjust="spacingAndGlyphs">Layer 1</text>
<text x="1780" y="194" class="l" textLength="34" lengthAdjust="spacingAndGlyphs">Layer 1</text>
<text x="1780" y="215" class="l" textLength="34" lengthAdjust="spacingAndGlyphs">Layer 1</text>
<text x="1780" y="236" class="l" textLength="34" lengthAdjust="spacingAndGlyphs">Layer 1</text>
<text x="1780" y="257" class="l" textLength="34" lengthAdjust="spacingAndGlyphs">Layer 1</text>
<text x="1780" y="278" class="l" textLength="34" lengthAdjust="spacingAndGlyphs">Layer 1</text>
<text x="1780" y="299" class="l" textLength="34" lengthAdjust="spacingAndGlyphs">Layer 1</text>
<text x="1685" y="387" style="font-size:11px;fill:#bbb" textLength="39" lengthAdjust="spacingAndGlyphs">8 Layers</text>
<circle cx="1783" cy="380" r="4" fill="none" stroke="#6a6a6a" stroke-width="1.200"/><path d="M1780,383L1776,388" stroke="#6a6a6a" stroke-width="1.500"/>
<rect x="1803" y="377" width="8" height="8" fill="none" stroke="#c6c6c6"/><rect x="1807" y="381" width="8" height="8" fill="#c6c6c6" stroke="#535353"/>
<path d="M1826,378V383H1830M1830,381L1827,383L1830,385" fill="none" stroke="#c6c6c6"/><path d="M1833,377H1841V388H1836L1833,385Z" class="i"/>
<path d="M1855,377H1866V388H1860V383H1855Z" class="i"/>
<path d="M1880,378H1892M1884,378V376H1888V378M1881.500,378V388H1890.500V378M1884.500,380V386M1887.500,380V386" fill="none" stroke="#c6c6c6"/>

<!-- swatches -->
<rect x="1679" y="394" width="241" height="209" fill="#535353"/>
<rect x="1679" y="394" width="241" height="28" fill="#424242"/>
<rect x="1679" y="394" width="64" height="28" fill="#535353"/>
<path d="M1820.500,394V422" stroke="#383838"/>
<text x="1688" y="412" class="ta" textLength="47" lengthAdjust="spacingAndGlyphs">Swatches</text>
<text x="1752" y="412" class="t" textLength="60" lengthAdjust="spacingAndGlyphs">Appearance</text>
<use href="#menuic" x="1903" y="406"/>
<rect x="1685" y="429" width="18" height="18" fill="#114ea0" stroke="#fff"/>
<g transform="translate(1694,438)"><use href="#none"/></g>
<rect x="1865.500" y="428.500" width="48" height="24" rx="2" fill="#4b4b4b" stroke="#606060"/>
<rect x="1890" y="429" width="23" height="23" fill="#333"/>
<path d="M1871,435H1883M1871,440H1883M1871,445H1883" stroke="#c6c6c6" stroke-width="2.500"/>
<path d="M1895,433h4v4h-4zM1900,433h4v4h-4zM1905,433h4v4h-4zM1895,438h4v4h-4zM1900,438h4v4h-4zM1905,438h4v4h-4zM1895,443h4v4h-4zM1900,443h4v4h-4zM1905,443h4v4h-4z" class="i"/>
<rect x="1684.500" y="463.500" width="229" height="120" fill="#515151" stroke="#606060"/>
<rect x="1685.500" y="465" width="12" height="12" fill="#fff" stroke="#111"/><path d="M1686.500,476L1696.500,466" stroke="#ee1c25" stroke-width="1.600"/>
<rect x="1699" y="464.500" width="13" height="13" fill="#e5e5e5"/><circle cx="1705.500" cy="471" r="3.500" fill="none" stroke="#444"/><path d="M1705.500,465V477M1699.500,471H1712" stroke="#444"/>
<path d="M1690,589H1692V598H1690ZM1693.500,589H1695.500V598H1693.500ZM1697,589L1699,588L1703,598H1701Z" class="i"/><path d="M1703,597h3l-1.500,2z" class="i"/>
<circle cx="1722" cy="593" r="3.500" fill="none" stroke="#c6c6c6" stroke-width="1.500"/><path d="M1725,590L1729,587M1725,596L1729,599" stroke="#c6c6c6"/><circle cx="1729" cy="587" r="1.300" class="i"/><circle cx="1729" cy="599" r="1.300" class="i"/>
<path d="M1748,597H1758A4,4 0 0 0 1758,589A5,5 0 0 0 1749,588A4,4 0 0 0 1746,593Z" class="i"/><path d="M1740,594H1748M1745,591L1748,594L1745,597" fill="none" stroke="#c6c6c6"/>
<path d="M1775,588h4v4h-4zM1780,588h4v4h-4zM1775,593h4v4h-4zM1780,593h4v4h-4zM1785,588h1v9h-1z" class="i"/><path d="M1787,598h3l-1.500,2z" class="i"/>
<rect x="1802" y="589" width="10" height="10" fill="none" stroke="#6f6f6f"/><path d="M1804,592H1810M1804,595H1810" stroke="#6f6f6f"/>
<path d="M1827,588H1834L1835,590H1840V599H1827Z" class="i"/>
<path d="M1855,588H1866V599H1860V594H1855Z" fill="#6f6f6f"/>
<path d="M1880,590H1891M1884,590V588H1887V590M1881,590V600H1890V590" fill="none" stroke="#6f6f6f"/>

<!-- color -->
<rect x="1679" y="605" width="241" height="288" fill="#535353"/>
<rect x="1679" y="605" width="241" height="28" fill="#424242"/>
<rect x="1766" y="605" width="50" height="28" fill="#535353"/>
<text x="1688" y="623" class="t" textLength="69" lengthAdjust="spacingAndGlyphs">Transparency</text>
<path d="M1770.500,617L1773,614L1775.500,617M1770.500,621L1773,624L1775.500,621" fill="none" stroke="#bbb"/>
<text x="1781" y="623" class="ta" textLength="28" lengthAdjust="spacingAndGlyphs">Color</text>
<use href="#menuic" x="1903" y="616"/>
<rect x="1688" y="644" width="6" height="6" fill="#333" stroke="#fff"/><rect x="1685" y="641" width="6.500" height="6.500" fill="#fff" stroke="#111"/>
<path d="M1705,644H1711V650M1709,648L1711,651L1713,648M1707,642L1705,644L1707,646" fill="none" stroke="#c6c6c6"/>
<rect x="1685" y="658" width="18" height="18.500" fill="#114ea0" stroke="#fff"/>
<g transform="translate(1694,667)"><use href="#none"/></g>
<g style="font-size:11px;font-weight:bold;fill:#a9b6c6"><text x="1731" y="656">R</text><text x="1731" y="689">G</text><text x="1731" y="722">B</text></g>
<g fill="#4b4b4b" stroke="#5f5f5f"><rect x="1749.500" y="648.500" width="112" height="5.500" rx="1"/><rect x="1749.500" y="681.500" width="112" height="5.500" rx="1"/><rect x="1749.500" y="714.500" width="112" height="5.500" rx="1"/>
<rect x="1869.500" y="642" width="35" height="20" rx="2" fill="#484848"/><rect x="1869.500" y="675" width="35" height="20" rx="2" fill="#484848"/><rect x="1869.500" y="707.500" width="35" height="20" rx="2" fill="#484848"/></g>
<path d="M1696,727L1691,732H1694V737H1701V734H1698V732H1701Z" class="i"/>
<rect x="1709.500" y="725.500" width="13" height="13" fill="#231f20" stroke="#fff"/>
<rect x="1684.500" y="747.500" width="38.500" height="13" fill="#fff" stroke="#333"/><rect x="1697.500" y="748" width="13" height="12.500" fill="#000"/>
<path d="M1686,760L1696.500,748" stroke="#ee1c25" stroke-width="1.600"/>
<text x="1827" y="760" style="font-size:12px;font-weight:bold;fill:#a9b6c6">#</text>
<rect x="1837.500" y="744.500" width="65" height="19.500" rx="2" fill="#484848" stroke="#5f5f5f"/>
<rect x="1686" y="772" width="216" height="113" fill="url(#sp)"/><rect x="1686" y="772" width="216" height="113" fill="url(#sw)"/><rect x="1686" y="772" width="216" height="113" fill="url(#sb)"/>
<rect x="1685.500" y="771.500" width="217" height="114" fill="none" stroke="#333"/>

<!-- separations -->
<rect x="1679" y="895" width="241" height="27" fill="#464646"/>
<rect x="1679" y="895" width="120" height="27" fill="#535353"/>
<text x="1688" y="912" class="ta" textLength="104" lengthAdjust="spacingAndGlyphs">Separations Preview</text>

<!-- attributes -->
<rect x="1679" y="925" width="241" height="73" fill="#535353"/>
<rect x="1679" y="925" width="241" height="27.500" fill="#424242"/>
<rect x="1772" y="925" width="74" height="27.500" fill="#535353"/>
<text x="1688" y="943" class="t" textLength="76" lengthAdjust="spacingAndGlyphs">Document Info</text>
<path d="M1777,936L1779.500,933L1782,936M1777,941L1779.500,944L1782,941" fill="none" stroke="#bbb"/>
<text x="1787" y="943" class="ta" textLength="52" lengthAdjust="spacingAndGlyphs">Attributes</text>
<use href="#menuic" x="1903" y="936"/>
<rect x="1685.500" y="961" width="11" height="11" rx="1.500" fill="#4d4d4d" stroke="#c0c0c0"/>
<text x="1702" y="970.500" style="font-size:11px;fill:#e0e0e0" textLength="63" lengthAdjust="spacingAndGlyphs">Overprint Fill</text>
<rect x="1685.500" y="980.500" width="11" height="11" rx="1.500" fill="#4d4d4d" stroke="#6a6a6a"/>
<text x="1702" y="990" style="font-size:11px;fill:#777" textLength="79" lengthAdjust="spacingAndGlyphs">Overprint Stroke</text>
</svg>
</body></html>
